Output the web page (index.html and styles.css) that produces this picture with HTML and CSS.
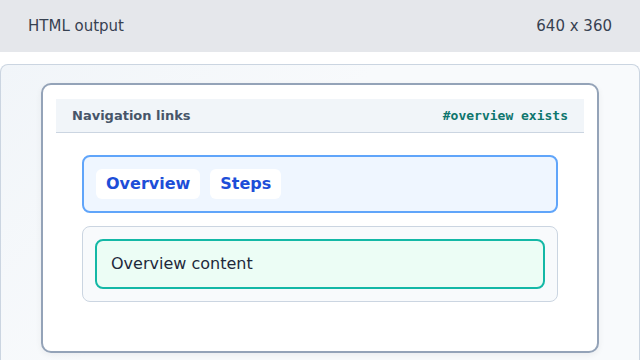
FILE: index.html
```html
<!DOCTYPE html>
<html>
<head>
<meta charset="utf-8">
<link rel="stylesheet" href="styles.css">
</head>
<body>
<div class="topbar">
  <span>HTML output</span>
  <span>640 x 360</span>
</div>
<div class="panel">
  <div class="card">
    <div class="card-head">
      <span class="title">Navigation links</span>
      <code class="status">#overview exists</code>
    </div>
    <div class="card-body">
      <nav class="nav">
        <a class="pill" href="#overview">Overview</a>
        <a class="pill" href="#steps">Steps</a>
      </nav>
      <div class="content">
        <div class="section" id="overview">Overview content</div>
      </div>
    </div>
  </div>
</div>
</body>
</html>
```
FILE: styles.css
```css
html, body {
  margin: 0;
  padding: 0;
  background: #ffffff;
  font-family: "DejaVu Sans", sans-serif;
  overflow: hidden;
}
.topbar {
  height: 52px;
  background: #e5e7eb;
  display: flex;
  align-items: center;
  justify-content: space-between;
  padding: 0 28px;
  font-size: 15px;
  color: #374151;
  margin-bottom: 12px;
}
.panel {
  border: 1px solid #cbd5e1;
  border-bottom: none;
  border-radius: 8px 8px 0 0;
  background: linear-gradient(135deg, #f1f5f9 0%, #f8fafc 40%, #f8fafc 100%);
  padding: 18px 40px 0 40px;
  height: 295px;
}
.card {
  background: #ffffff;
  border: 2px solid #94a3b8;
  border-radius: 10px;
  padding: 14px 13px 49px 13px;
  box-shadow: 0 2px 6px rgba(15, 23, 42, 0.06);
}
.card-head {
  display: flex;
  justify-content: space-between;
  align-items: center;
  height: 33px;
  padding: 0 16px;
  background: #f1f5f9;
  border-bottom: 1px solid #cbd5e1;
}
.title {
  font-weight: bold;
  font-size: 13px;
  color: #475569;
}
.status {
  font-family: "DejaVu Sans Mono", monospace;
  font-weight: bold;
  font-size: 13px;
  color: #0f766e;
}
.card-body {
  padding: 22px 26px 0 26px;
  display: flex;
  flex-direction: column;
  gap: 13px;
}
.nav {
  display: flex;
  gap: 10px;
  padding: 12px;
  background: #eff6ff;
  border: 2px solid #60a5fa;
  border-radius: 8px;
}
.pill {
  display: block;
  height: 30px;
  line-height: 30px;
  padding: 0 10px;
  background: #ffffff;
  border-radius: 6px;
  color: #1d4ed8;
  font-weight: bold;
  font-size: 16px;
  text-decoration: none;
}
.content {
  padding: 12px;
  background: #f8fafc;
  border: 1px solid #cbd5e1;
  border-radius: 8px;
}
.section {
  padding: 12px 14px;
  line-height: 22px;
  font-size: 16px;
  color: #1e293b;
  background: #ecfdf5;
  border: 2px solid #14b8a6;
  border-radius: 8px;
}
```
